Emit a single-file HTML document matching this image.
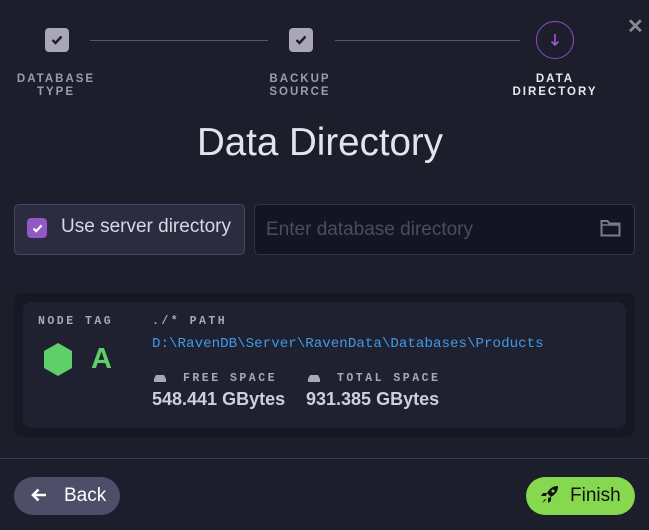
<!DOCTYPE html>
<html><head><meta charset="utf-8"><style>
*{margin:0;padding:0;box-sizing:border-box}
body{width:649px;height:530px;background:#1c1e2b;font-family:"Liberation Sans",sans-serif;position:relative;overflow:hidden;color:#d6d6e0}
.a{position:absolute}
.chk{width:24px;height:24px;border-radius:4px;background:#a8a6b8;display:flex;align-items:center;justify-content:center}
.line{height:1px;background:#5b5478;top:40px}
.lbl{font-size:11.5px;font-weight:bold;letter-spacing:2px;text-align:center;line-height:13px;color:#9d9cad}
.mono{font-family:"Liberation Mono",monospace}
.cap{font-size:11.5px;font-weight:bold;letter-spacing:2.5px;color:#a9a8b8}
</style></head><body>
<div class="a chk" style="left:45px;top:28px"><svg width="12" height="10" viewBox="0 0 12 10"><path d="M1.5 5l3 3 6-6.5" stroke="#1c1e2b" stroke-width="2.4" fill="none"/></svg></div>
<div class="a line" style="left:90px;width:178px"></div>
<div class="a chk" style="left:289px;top:28px"><svg width="12" height="10" viewBox="0 0 12 10"><path d="M1.5 5l3 3 6-6.5" stroke="#1c1e2b" stroke-width="2.4" fill="none"/></svg></div>
<div class="a line" style="left:335px;width:185px"></div>
<div class="a" style="left:536px;top:21px;width:38px;height:38px;border:1.5px solid #8a4fc0;border-radius:50%;display:flex;align-items:center;justify-content:center"><svg width="10" height="14" viewBox="0 0 10 14"><path d="M5 1v11M1.5 8.5L5 12l3.5-3.5" stroke="#9b5ad0" stroke-width="1.6" fill="none"/></svg></div>
<div class="a" style="left:627px;top:14px;font-size:20px;font-weight:bold;color:#8a8a96">✕</div>
<div class="a lbl" style="left:6px;top:73px;width:100px">DATABASE<br>TYPE</div>
<div class="a lbl" style="left:250px;top:73px;width:100px">BACKUP<br>SOURCE</div>
<div class="a lbl" style="left:500px;top:73px;width:110px;color:#e8e8ef">DATA<br>DIRECTORY</div>
<div class="a" style="left:0;width:640px;top:121px;text-align:center;font-size:38.5px;color:#e4e4ec">Data Directory</div>
<div class="a" style="left:14px;top:204px;width:231px;height:51px;background:#2b2c40;border:1px solid #464862;border-radius:5px"></div>
<div class="a" style="left:27px;top:218px;width:20px;height:20px;border-radius:4px;background:#9458c4;display:flex;align-items:center;justify-content:center"><svg width="11" height="9" viewBox="0 0 12 10"><path d="M1.5 5l3 3 6-6.5" stroke="#fff" stroke-width="2.4" fill="none"/></svg></div>
<div class="a" style="left:61px;top:216px;font-size:19px;color:#d8d8e2">Use server directory</div>
<div class="a" style="left:254px;top:204px;width:381px;height:51px;background:#141523;border:1px solid #33354a;border-radius:5px"></div>
<div class="a" style="left:266px;top:219px;font-size:19px;color:#4a4b5e">Enter database directory</div>
<svg class="a" style="left:600px;top:219px" width="21" height="18" viewBox="0 0 21 18"><path d="M1.5 2h6l2 2.5h10v12h-18z" stroke="#7a7a88" stroke-width="2" fill="none"/><path d="M1.5 6h18" stroke="#7a7a88" stroke-width="1.5"/></svg>
<div class="a" style="left:14px;top:293px;width:621px;height:144px;background:#171824;border-radius:8px"></div>
<div class="a" style="left:23px;top:302px;width:603px;height:126px;background:#1f2030;border-radius:8px"></div>
<div class="a cap mono" style="left:38px;top:315px">NODE TAG</div>
<svg class="a" style="left:43px;top:343px" width="30" height="33" viewBox="0 0 30 33"><path d="M15 0l14 8v17l-14 8-14-8v-17z" fill="#5fd069"/></svg>
<div class="a" style="left:91px;top:343px;font-size:29px;font-weight:bold;color:#5fd069">A</div>
<div class="a cap mono" style="left:152px;top:315px">./* PATH</div>
<div class="a mono" style="left:152px;top:336px;font-size:14.2px;color:#3f9be6">D:\RavenDB\Server\RavenData\Databases\Products</div>
<svg class="a" style="left:153px;top:374px" width="14" height="9" viewBox="0 0 14 9"><path d="M1 5l2-4h8l2 4v3h-12z" fill="#a9a8b8"/></svg>
<div class="a cap mono" style="left:183px;top:372px">FREE SPACE</div>
<svg class="a" style="left:307px;top:374px" width="14" height="9" viewBox="0 0 14 9"><path d="M1 5l2-4h8l2 4v3h-12z" fill="#a9a8b8"/></svg>
<div class="a cap mono" style="left:337px;top:372px">TOTAL SPACE</div>
<div class="a" style="left:152px;top:389px;font-size:18px;font-weight:bold;color:#cfcfd9">548.441 GBytes</div>
<div class="a" style="left:306px;top:389px;font-size:18px;font-weight:bold;color:#cfcfd9">931.385 GBytes</div>
<div class="a" style="left:0;top:458px;width:649px;height:1px;background:#3a3b4c"></div>
<div class="a" style="left:14px;top:477px;width:106px;height:38px;background:#4e4e68;border-radius:19px"></div>
<svg class="a" style="left:30px;top:487px" width="18" height="16" viewBox="0 0 18 16"><path d="M16 8H3M8.5 2.5L3 8l5.5 5.5" stroke="#fff" stroke-width="2.6" fill="none"/></svg>
<div class="a" style="left:64px;top:485px;font-size:19px;color:#fff">Back</div>
<div class="a" style="left:526px;top:477px;width:109px;height:38px;background:#86d94f;border-radius:19px"></div>
<svg class="a" style="left:540px;top:484px" width="20" height="21" viewBox="0 0 20 21"><path d="M18 2c-5 0-8 2-11 7l4 4c5-3 7-6 7-11z" fill="#111"/><path d="M7 9H3l-2 3h5zM11 13v4l-3 2v-5z" fill="#111"/><path d="M5 15l-3 4 4-3z" fill="#111"/><circle cx="13" cy="7" r="1.5" fill="#86d94f"/></svg>
<div class="a" style="left:570px;top:485px;font-size:19px;color:#111">Finish</div>
</body></html>
